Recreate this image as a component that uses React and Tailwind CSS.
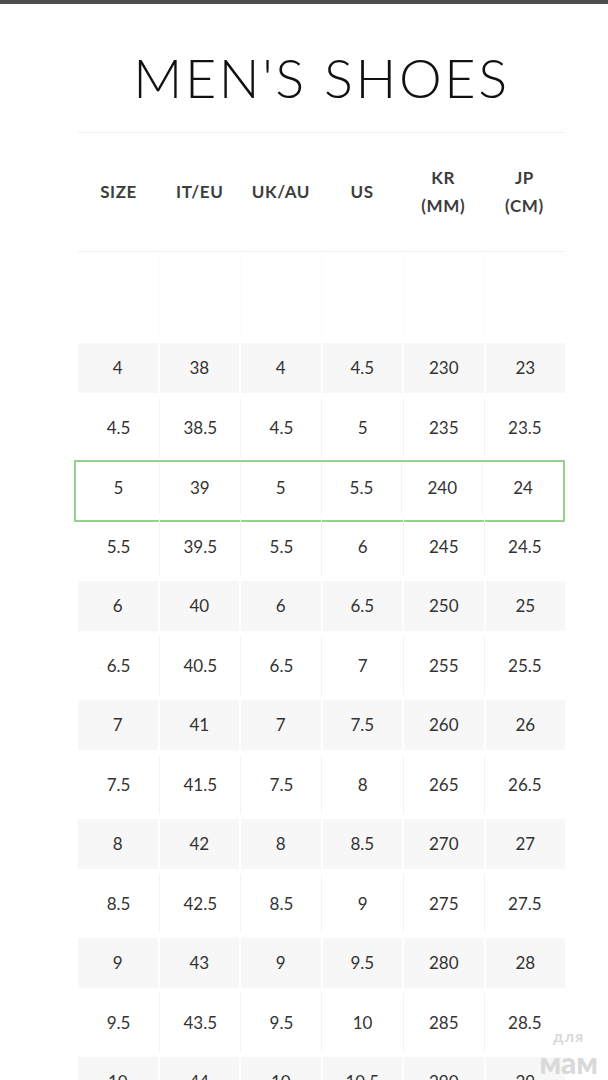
const rows = [
  ['4', '38', '4', '4.5', '230', '23'],
  ['4.5', '38.5', '4.5', '5', '235', '23.5'],
  ['5', '39', '5', '5.5', '240', '24'],
  ['5.5', '39.5', '5.5', '6', '245', '24.5'],
  ['6', '40', '6', '6.5', '250', '25'],
  ['6.5', '40.5', '6.5', '7', '255', '25.5'],
  ['7', '41', '7', '7.5', '260', '26'],
  ['7.5', '41.5', '7.5', '8', '265', '26.5'],
  ['8', '42', '8', '8.5', '270', '27'],
  ['8.5', '42.5', '8.5', '9', '275', '27.5'],
  ['9', '43', '9', '9.5', '280', '28'],
  ['9.5', '43.5', '9.5', '10', '285', '28.5'],
  ['10', '44', '10', '10.5', '290', '29'],
  ['10.5', '44.5', '10.5', '11', '295', '29.5'],
]

const headers = [['SIZE'], ['IT/EU'], ['UK/AU'], ['US'], ['KR', '(MM)'], ['JP', '(CM)']]

export default function App() {
  return (
    <div className="relative min-h-screen bg-white overflow-hidden" style={{ fontFamily: 'Lato, "Open Sans", sans-serif' }}>
      <div className="h-[4px] bg-[#4d4d4d]" />

      <div className="ml-[78px] w-[487px]">
        <h1 className="pt-[44px] pb-[24px] text-center text-[54px] leading-[60px] font-light tracking-[2.6px] text-[#111]">
          MEN'S SHOES
        </h1>

        {/* header */}
        <div className="grid grid-cols-6 h-[120px] border-t border-b border-[#efefef] items-center">
          {headers.map((h, i) => (
            <div key={i} className="h-full flex flex-col items-center justify-center text-[17px] leading-[28px] font-bold tracking-[0.6px] text-[#3d3d3d]">
              {h.map((t) => (
                <span key={t}>{t}</span>
              ))}
            </div>
          ))}
        </div>

        {/* empty band under header */}
        <div className="grid grid-cols-6 h-[86px]">
          {headers.map((_, i) => (
            <div key={i} className={i === 0 ? '' : 'border-l border-[#fbfbfb]'} />
          ))}
        </div>

        {rows.map((r, idx) => {
          const highlight = r[0] === '5'
          const gray = idx % 2 === 0 && !highlight
          if (highlight) {
            return (
              <div key={idx} className="h-[62px] mt-[3px] -mb-[5.5px] -ml-[4px] border-2 border-[#98d092] grid grid-cols-6 pl-[2px] pb-[6px]">
                {r.map((c, i) => (
                  <div key={i} className={`flex items-center justify-center text-[17px] text-[#333] ${i === 0 ? '' : 'border-l border-[#f4f4f4]'}`}>
                    {c}
                  </div>
                ))}
              </div>
            )
          }
          return (
            <div key={idx} className={`h-[59.5px] grid grid-cols-6 ${gray ? 'py-[5px] gap-x-[2px]' : ''}`}>
              {r.map((c, i) => (
                <div
                  key={i}
                  className={`flex items-center justify-center text-[17px] text-[#333] ${
                    gray ? 'bg-[#f7f7f7]' : i === 0 ? '' : 'border-l border-[#f4f4f4]'
                  }`}
                >
                  {c}
                </div>
              ))}
            </div>
          )
        })}
      </div>

      {/* watermark */}
      <div className="absolute right-[10px] top-[1028px] flex flex-col items-center gap-[3px] leading-none text-[#d9d9d9]">
        <span className="text-[16px] font-bold tracking-[1px]">для</span>
        <span className="text-[30px] font-black">мам</span>
      </div>
    </div>
  )
}
